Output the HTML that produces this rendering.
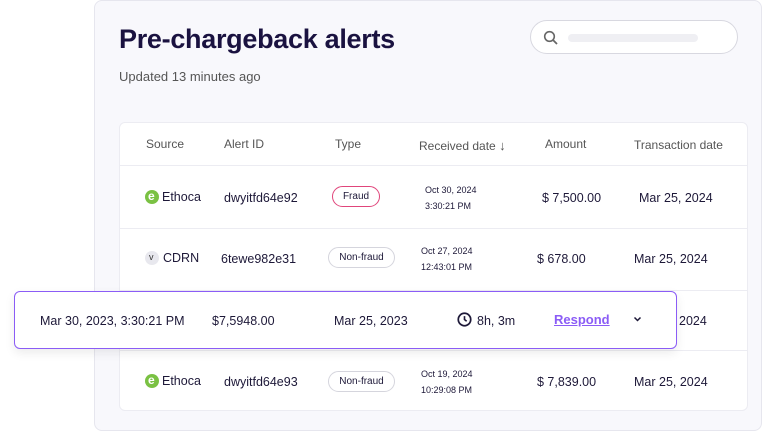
<!DOCTYPE html>
<html><head><style>
*{margin:0;padding:0;box-sizing:border-box}
body{width:768px;height:432px;background:#fff;font-family:"Liberation Sans",sans-serif;position:relative;overflow:hidden;color:#1d1838}
.card{position:absolute;left:94px;top:0;width:668px;height:431px;background:#f8f8fc;border:1px solid #e6e6ee;border-radius:8px}
h1{position:absolute;left:119px;top:24px;font-size:27px;font-weight:bold;color:#1a1240;letter-spacing:-0.3px}
.sub{position:absolute;left:119px;top:69px;font-size:13px;color:#555}
.search{position:absolute;left:530px;top:20px;width:208px;height:34px;border:1px solid #d8d8e0;border-radius:17px;background:#fff}
.search .bar{position:absolute;left:37px;top:13px;width:130px;height:8px;border-radius:4px;background:#efeff3}
.table{position:absolute;left:119px;top:122px;width:629px;height:289px;background:#fff;border:1px solid #ececf2;border-radius:6px}
.t{position:absolute;font-size:12.5px;white-space:nowrap}
.h{color:#555;font-size:12px}
.line{position:absolute;left:119px;width:629px;height:1px;background:#ececf2}
.pill{position:absolute;height:21px;border-radius:11px;font-size:10px;text-align:center;line-height:19px;background:#fff}
.sm{font-size:9px;line-height:16px}
.float{position:absolute;left:14px;top:291px;width:663px;height:58px;background:#fff;border:1.5px solid #8b5cf6;border-radius:6px;box-shadow:0 4px 10px rgba(0,0,0,.08)}
.ic{position:absolute;width:14px;height:14px;border-radius:7px}
</style></head><body>
<div class="card"></div>
<h1>Pre-chargeback alerts</h1>
<div class="sub">Updated 13 minutes ago</div>
<div class="search"><svg style="position:absolute;left:12px;top:9px" width="16" height="16" viewBox="0 0 16 16"><circle cx="6.5" cy="6.5" r="4.8" fill="none" stroke="#666" stroke-width="1.6"/><path d="M10 10l4 4" stroke="#666" stroke-width="1.8"/></svg><div class="bar"></div></div>
<div class="table"></div>
<div class="line" style="top:165px"></div>
<div class="line" style="top:228px"></div>
<div class="line" style="top:290px"></div>
<div class="line" style="top:350px"></div>
<div class="t h" style="left:146px;top:137px">Source</div>
<div class="t h" style="left:224px;top:137px">Alert ID</div>
<div class="t h" style="left:335px;top:137px">Type</div>
<div class="t h" style="left:419px;top:138px">Received date <span style="font-size:13px">↓</span></div>
<div class="t h" style="left:545px;top:137px">Amount</div>
<div class="t h" style="left:634px;top:138px">Transaction date</div>

<div class="ic" style="left:145px;top:190px;background:#7ac143"><span style="position:absolute;left:3px;top:-1px;color:#fff;font-size:12px;font-weight:bold">e</span></div>
<div class="t" style="left:162px;top:190px">Ethoca</div>
<div class="t" style="left:224px;top:191px">dwyitfd64e92</div>
<div class="pill" style="left:332px;top:186px;width:48px;border:1.5px solid #e0457b">Fraud</div>
<div class="t sm" style="left:425px;top:182px">Oct 30, 2024<br>3:30:21 PM</div>
<div class="t" style="left:542px;top:191px">$ 7,500.00</div>
<div class="t" style="left:639px;top:191px">Mar 25, 2024</div>

<div class="ic" style="left:145px;top:251px;background:#e8e8ee"><span style="position:absolute;left:4px;top:1px;color:#333;font-size:9px">v</span></div>
<div class="t" style="left:163px;top:251px">CDRN</div>
<div class="t" style="left:221px;top:252px">6tewe982e31</div>
<div class="pill" style="left:328px;top:247px;width:67px;border:1px solid #d5d5dd">Non-fraud</div>
<div class="t sm" style="left:421px;top:243px">Oct 27, 2024<br>12:43:01 PM</div>
<div class="t" style="left:537px;top:252px">$ 678.00</div>
<div class="t" style="left:634px;top:252px">Mar 25, 2024</div>

<div class="ic" style="left:145px;top:374px;background:#7ac143"><span style="position:absolute;left:3px;top:-1px;color:#fff;font-size:12px;font-weight:bold">e</span></div>
<div class="t" style="left:162px;top:374px">Ethoca</div>
<div class="t" style="left:224px;top:375px">dwyitfd64e93</div>
<div class="pill" style="left:328px;top:371px;width:67px;border:1px solid #d5d5dd">Non-fraud</div>
<div class="t sm" style="left:421px;top:366px">Oct 19, 2024<br>10:29:08 PM</div>
<div class="t" style="left:537px;top:375px">$ 7,839.00</div>
<div class="t" style="left:634px;top:375px">Mar 25, 2024</div>

<div class="t" style="left:679px;top:314px">2024</div>
<div class="float"></div>
<div class="t" style="left:40px;top:314px">Mar 30, 2023, 3:30:21 PM</div>
<div class="t" style="left:212px;top:314px">$7,5948.00</div>
<div class="t" style="left:334px;top:314px">Mar 25, 2023</div>
<svg style="position:absolute;left:457px;top:312px" width="15" height="15" viewBox="0 0 14 14"><circle cx="7" cy="7" r="5.8" fill="none" stroke="#1d1838" stroke-width="1.6"/><path d="M7 3.8V7l2 1.6" fill="none" stroke="#1d1838" stroke-width="1.5"/></svg>
<div class="t" style="left:477px;top:314px">8h, 3m</div>
<div class="t" style="left:554px;top:312px;color:#8b5cf6;font-weight:bold;font-size:13px;text-decoration:underline">Respond</div>
<svg style="position:absolute;left:633px;top:316px" width="9" height="6" viewBox="0 0 9 6"><path d="M1.5 1.5l3 3 3-3" fill="none" stroke="#1d1838" stroke-width="1.5"/></svg>
</body></html>
